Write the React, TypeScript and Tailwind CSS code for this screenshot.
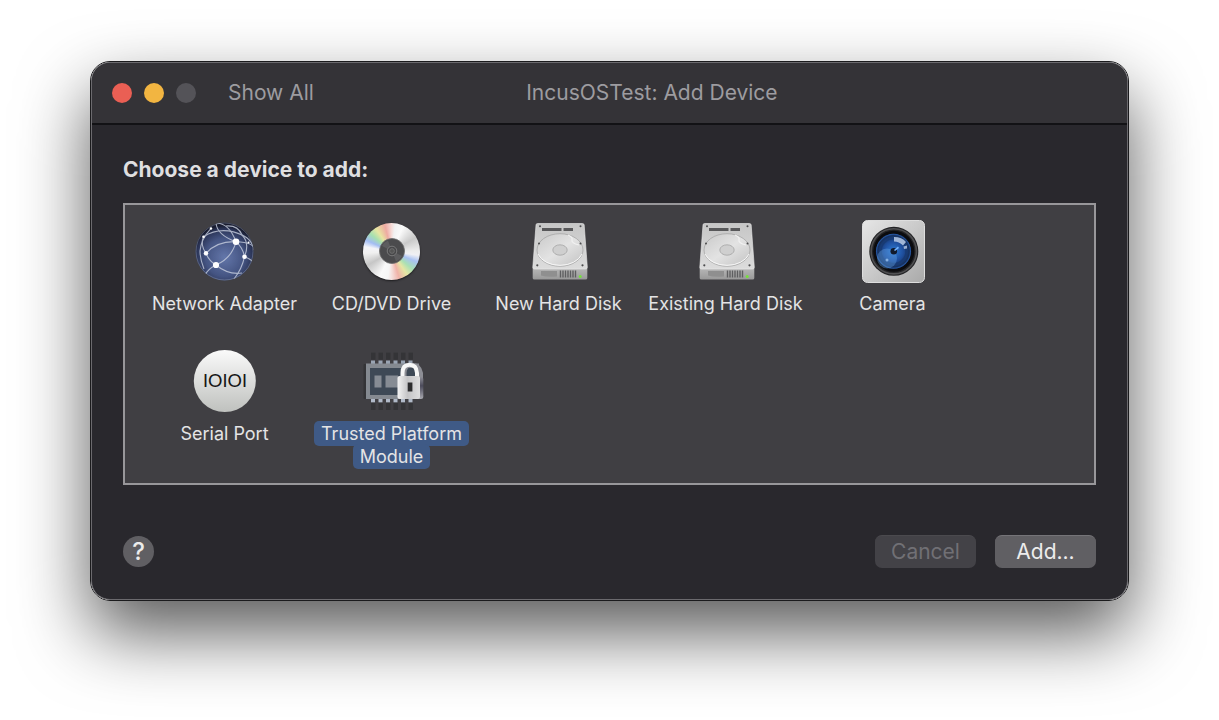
import { useState, type ReactNode } from "react";

function NetworkIcon() {
  return (
    <svg viewBox="1 0 64 64" className="size-16" aria-hidden="true">
      <defs>
        <radialGradient id="globe" cx="0.5" cy="0.6" r="0.55">
          <stop offset="0" stopColor="#6477aa" />
          <stop offset="0.6" stopColor="#455583" />
          <stop offset="0.9" stopColor="#2a3355" />
          <stop offset="1" stopColor="#191d30" />
        </radialGradient>
        <clipPath id="globe-clip">
          <circle cx="32.5" cy="32.5" r="29" />
        </clipPath>
      </defs>
      <circle cx="32.5" cy="32.5" r="29" fill="url(#globe)" />
      <g clipPath="url(#globe-clip)" fill="none" stroke="#c9d0e0" strokeWidth="1.1" opacity="0.8">
        <path d="M44 22.7Q40 39 24 46" />
        <path d="M24 46Q16 50 13 56" />
        <path d="M14 34.3Q17 42 24 46Q36 56 50 54" />
        <path d="M14 34.3Q25 22 44 22.7T62 31" />
        <path d="M44 22.7Q51 29 52.5 37.7Q59 40 62 44" />
        <path d="M44 22.7Q25 16 24 4Q37 4 44 22.7" />
        <path d="M11.5 17.7Q30 6 52 17Q58 20 61 27" />
        <path d="M11.5 17.7Q8 26 14 34.3" />
        <path d="M34 7Q46 6 50 16Q58 24 52.5 37.7Q50 50 42 60" />
        <path d="M19 9.3Q9 20 8 32Q8 40 12 50" />
      </g>
      <circle cx="32.5" cy="32.5" r="28.5" fill="none" stroke="#a7b1c8" strokeOpacity="0.35" />
      <g fill="#fff">
        <circle cx="44" cy="22.7" r="3.3" />
        <circle cx="24" cy="46" r="3.1" />
        <circle cx="52.5" cy="37.7" r="2.3" />
        <circle cx="14" cy="34.3" r="2.2" />
        <circle cx="11.5" cy="17.7" r="1.3" />
        <circle cx="19" cy="9.5" r="1.2" />
        <circle cx="56.5" cy="23.5" r="1" />
      </g>
    </svg>
  );
}

function DiscIcon() {
  return (
    <div className="flex size-16 items-center justify-center">
      <div className="flex size-[57px] items-center justify-center rounded-full bg-[conic-gradient(#f6dcd8_0deg,#f2f2f2_8deg,#fafafa_25deg,#c9c9c9_60deg,#ececec_88deg,#f0f0f4_98deg,#a9c2f2_112deg,#a9e0b4_130deg,#e6e6a4_146deg,#f0b2a8_164deg,#f4dcd8_178deg,#f6f6f6_188deg,#fafafa_205deg,#c6c6c6_240deg,#f0f0f0_266deg,#f4f4f8_280deg,#a3bdf3_294deg,#a6e0b0_310deg,#e8e6a2_326deg,#eeaaa2_346deg,#f6dcd8_360deg)] shadow-[0_1px_2px_#1c1c1e]">
        <svg viewBox="0 0 26 26" className="size-[26px]" aria-hidden="true">
          <circle cx="13" cy="13" r="12.5" fill="#4b4b4d" stroke="#6b6b6b" strokeWidth="0.8" />
          <path d="M3 8A11.5 11.5 0 0 1 9 2.5L13 13ZM23 18A11.5 11.5 0 0 1 17 23.5L13 13Z" fill="#5c5c5e" />
          <circle cx="13" cy="13" r="4.8" fill="#48484a" stroke="#858585" strokeWidth="0.8" />
          <circle cx="13" cy="13" r="2.4" fill="#555" stroke="#7d7d7d" strokeWidth="0.6" />
        </svg>
      </div>
    </div>
  );
}

function HardDiskIcon() {
  return (
    <svg viewBox="0 0 64 64" className="size-16" aria-hidden="true">
      <defs>
        <linearGradient id="disk-top" x1="0" y1="0" x2="0" y2="1">
          <stop offset="0" stopColor="#c6c6c6" />
          <stop offset="1" stopColor="#dcdcdc" />
        </linearGradient>
        <linearGradient id="disk-front" x1="0" y1="0" x2="0" y2="1">
          <stop offset="0" stopColor="#bababa" />
          <stop offset="1" stopColor="#999" />
        </linearGradient>
        <linearGradient id="platter" x1="0" y1="0" x2="1" y2="1">
          <stop offset="0" stopColor="#c9c9c9" />
          <stop offset="0.5" stopColor="#e3e3e3" />
          <stop offset="1" stopColor="#c2c2c2" />
        </linearGradient>
      </defs>
      <path d="M5.7 48H60.3V59Q60.3 60.5 58.5 60.5H7.5Q5.700 60.5 5.7 59Z" fill="url(#disk-front)" />
      <path
        d="M10.5 4.5H55.5Q57 4.5 57.2 6L60.3 48Q60.3 50 58.5 50H7.5Q5.7 50 5.8 48L9 6Q9 4.5 10.5 4.5Z"
        fill="url(#disk-top)"
        stroke="#ededed"
        strokeWidth="0.6"
      />
      <path d="M15 9H34.5V12H15ZM36.5 9H46V12H36.5Z" fill="#58585a" />
      <ellipse cx="33" cy="31" rx="23" ry="16.3" fill="url(#platter)" stroke="#a0a0a0" strokeWidth="0.7" />
      <path d="M11 35A23 16 0 0 0 55 35" fill="none" stroke="#f8f8f8" strokeWidth="1" />
      <path d="M41 16Q46 18 45 21T52 26" fill="none" stroke="#f1f1f1" strokeWidth="1.2" />
      <ellipse cx="33" cy="31" rx="7.2" ry="5.2" fill="#cfcfcf" stroke="#9f9f9f" strokeWidth="0.7" />
      <g fill="#4c4c4e">
        <circle cx="13" cy="7.2" r="1" />
        <circle cx="53.5" cy="7.2" r="1" />
        <circle cx="12" cy="24.5" r="1" />
        <circle cx="53.5" cy="24.5" r="1" />
        <circle cx="10.3" cy="46.3" r="1.1" />
        <circle cx="55.5" cy="46.3" r="1.1" />
      </g>
      <path d="M14 52H30V57.500Q20 58.500 14 56.500Z" fill="#8f8f8f" />
      <path
        d="M33.5 51.5V58.5M36 51.5V58.5M38.5 51.5V58.5M41 51.5V58.5M43.5 51.5V58.5M46 51.5V58.5M48.5 51.5V58.5"
        stroke="#5e5e60"
        strokeWidth="1.4"
      />
      <circle cx="53.2" cy="57.5" r="1.5" fill="#75e23c" />
    </svg>
  );
}

function CameraIcon() {
  return (
    <svg viewBox="0 0 64 64" className="size-16" aria-hidden="true">
      <defs>
        <linearGradient id="camera-body" x1="0" y1="0" x2="1" y2="1">
          <stop offset="0" stopColor="#e6e6e6" />
          <stop offset="0.5" stopColor="#c9c9c9" />
          <stop offset="1" stopColor="#a9a9a9" />
        </linearGradient>
        <radialGradient id="lens">
          <stop offset="0" stopColor="#2d7bd6" />
          <stop offset="0.55" stopColor="#1f4f9e" />
          <stop offset="0.9" stopColor="#16315f" />
          <stop offset="1" stopColor="#2b62b8" />
        </radialGradient>
      </defs>
      <rect x="1.5" y="1.5" width="62" height="62" rx="5" fill="url(#camera-body)" stroke="#dedede" />
      <circle cx="32.8" cy="32.3" r="24.5" fill="#232325" />
      <circle cx="32.8" cy="32.3" r="22.6" fill="none" stroke="#505052" strokeWidth="1.6" />
      <circle cx="32.8" cy="32.3" r="20.5" fill="#0b0b0e" />
      <circle cx="32.5" cy="32.3" r="17.5" fill="url(#lens)" />
      <circle cx="32.5" cy="32.3" r="12.5" fill="none" stroke="#17376f" strokeWidth="1.5" opacity="0.7" />
      <circle cx="26" cy="39.5" r="10" fill="#67a5e8" opacity="0.38" />
      <path d="M33 18Q41 18 45 23L42 26.5Q38 22.5 33 22.5Z" fill="#b9cbe8" opacity="0.85" />
      <path d="M42.5 27.5L46 26.5V29.5L43 30Z" fill="#b9cbe8" opacity="0.8" />
      <circle cx="32.8" cy="32.3" r="3.3" fill="#101a2d" />
      <path d="M33 31L37 27.5L38 29L34 32Z" fill="#75b4ff" />
      <circle cx="26" cy="41" r="1.5" fill="#a7cefa" opacity="0.7" />
    </svg>
  );
}

function SerialIcon() {
  return (
    <svg viewBox="1 0 64 64" className="size-16" aria-hidden="true">
      <defs>
        <linearGradient id="serial" x1="0" y1="0" x2="0" y2="1">
          <stop offset="0" stopColor="#fafafa" />
          <stop offset="1" stopColor="#bfc1be" />
        </linearGradient>
      </defs>
      <circle cx="32.8" cy="32" r="31" fill="url(#serial)" />
      <text x="33" y="38" textAnchor="middle" fontSize="18" fill="#161616" className="font-[Lato]">
        IOIOI
      </text>
    </svg>
  );
}

const PINS = [12, 19.5, 27, 34.5, 42, 49.5];

function TpmIcon() {
  return (
    <svg viewBox="0 0 64 64" className="size-16" aria-hidden="true">
      <defs>
        <linearGradient id="lock-body" x1="0" y1="0" x2="1" y2="0">
          <stop offset="0" stopColor="#f4f4f4" />
          <stop offset="0.45" stopColor="#c4c4c6" />
          <stop offset="1" stopColor="#dededf" />
        </linearGradient>
        <linearGradient id="lock-side" x1="0" y1="0" x2="0" y2="1">
          <stop offset="0" stopColor="#8c8c94" />
          <stop offset="0.4" stopColor="#4c4b5b" />
          <stop offset="1" stopColor="#a9a9b0" />
        </linearGradient>
      </defs>
      <rect x="3.5" y="15" width="4" height="35" rx="1" fill="#343437" />
      {PINS.map((x) => (
        <g key={x}>
          <rect x={x - 1} y="3.7" width="4.5" height="7" fill="#343437" />
          <rect x={x - 1} y="54" width="4.5" height="7" fill="#343437" />
          <rect x={x - 1} y="11.5" width="4" height="4" fill="#99a4b3" />
          <rect x={x - 1} y="49" width="4" height="4.3" fill="#b0b9c8" />
        </g>
      ))}
      <rect x="6" y="14.5" width="53" height="35.5" fill="#858a91" />
      <rect x="10" y="19" width="45" height="27" fill="#3e4956" />
      <path d="M14.5 26.5H21.5V38.5H14.5ZM25.5 26.5H38V38.5H25.5Z" fill="#868c94" />
      <path d="M44.5 28V24Q44.5 16 52 16T61 24V29" fill="none" stroke="#8d8e95" strokeWidth="4" />
      <path d="M57 28H61Q63.3 28 63.3 30V48Q63.3 50 61 50H55Z" fill="url(#lock-side)" />
      <path d="M42.5 28V24Q42.5 15.7 49.5 15.7T57 24V28" fill="none" stroke="#f7f7f7" strokeWidth="4" />
      <rect x="37.5" y="27" width="22.5" height="23" rx="2" fill="url(#lock-body)" />
      <rect x="47.7" y="33.5" width="4.7" height="9" fill="#2c2c2e" />
    </svg>
  );
}

interface Device {
  name: string;
  icon: ReactNode;
}

const DEVICES: Device[] = [
  { name: "Network Adapter", icon: <NetworkIcon /> },
  { name: "CD/DVD Drive", icon: <DiscIcon /> },
  { name: "New Hard Disk", icon: <HardDiskIcon /> },
  { name: "Existing Hard Disk", icon: <HardDiskIcon /> },
  { name: "Camera", icon: <CameraIcon /> },
  { name: "Serial Port", icon: <SerialIcon /> },
  { name: "Trusted Platform Module", icon: <TpmIcon /> },
];

function TitleBar() {
  return (
    <header className="flex h-[62px] items-center border-b-2 border-[#121215] bg-[#343337] pl-5 text-[#9d9ca0]">
      <div className="flex gap-3">
        <button type="button" aria-label="Close" className="size-5 rounded-full bg-[#ea5f54]" />
        <button type="button" aria-label="Minimize" className="size-5 rounded-full bg-[#f2b541]" />
        <button type="button" aria-label="Zoom" disabled className="size-5 rounded-full bg-[#545358]" />
      </div>
      <button type="button" className="ml-8 shrink-0 text-[21px]">
        Show All
      </button>
      <h1 className="flex-1 pr-[137px] text-center text-[21px]">IncusOSTest: Add Device</h1>
    </header>
  );
}

export default function App() {
  const [selected, setSelected] = useState("Trusted Platform Module");

  return (
    <main className="min-h-screen bg-white px-[90px] pt-[61px] pb-[119px] font-['Inter','Liberation_Sans',sans-serif]">
      <div className="rounded-[20px] border border-[#1b1b1d] shadow-[0_32px_70px_rgba(0,0,0,0.65)]">
        <div className="overflow-hidden rounded-[19px] border border-[#6b6a6e] bg-[#29282d]">
          <TitleBar />
          <div className="px-[31px] pt-[29px] pb-[31px]">
            <h2 id="device-heading" className="text-[21px] leading-8 font-bold text-[#dfdfe0]">
              Choose a device to add:
            </h2>
            <ul
              aria-labelledby="device-heading"
              className="mt-[17px] grid grid-cols-[repeat(auto-fill,167px)] gap-y-[23px] border-2 border-[#98979a] bg-[#403f43] px-4 pt-3.5 pb-[15px]"
            >
              {DEVICES.map((device) => (
                <li key={device.name} className="min-h-[107px]">
                  <button
                    type="button"
                    aria-pressed={selected === device.name}
                    onClick={() => setSelected(device.name)}
                    className="flex w-full flex-col items-center gap-[9px]"
                  >
                    {device.icon}
                    <span className="text-lg leading-[23px] text-[#e4e4e5]">
                      <span
                        className={
                          selected === device.name
                            ? "rounded-[5px] bg-[#3f5a86] box-decoration-clone px-[7px] py-0.5"
                            : ""
                        }
                      >
                        {device.name}
                      </span>
                    </span>
                  </button>
                </li>
              ))}
            </ul>
            <footer className="mt-[50px] flex items-center text-[21px]">
              <button
                type="button"
                aria-label="Help"
                className="flex size-[31px] items-center justify-center rounded-full bg-[#605f63] text-2xl font-medium text-[#ececec]"
              >
                ?
              </button>
              <button
                type="button"
                disabled
                className="ml-auto h-[33px] w-[101px] rounded-[7px] border-t border-[#4b4a4e] bg-[#434247] text-[#717075]"
              >
                Cancel
              </button>
              <button
                type="button"
                className="ml-[19px] h-[33px] w-[101px] rounded-[7px] border-t border-[#757478] bg-[#605f63] text-[#ececec]"
              >
                Add...
              </button>
            </footer>
          </div>
        </div>
      </div>
    </main>
  );
}
